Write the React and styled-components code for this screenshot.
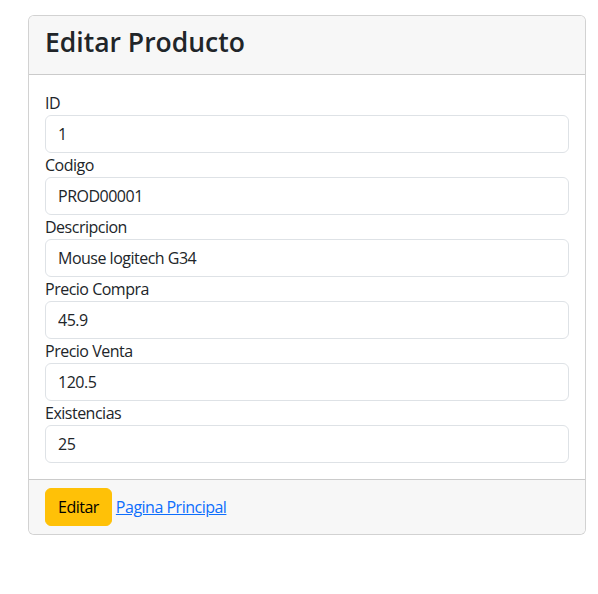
import React, { useState } from "react";
import styled, { createGlobalStyle } from "styled-components";

const GlobalStyle = createGlobalStyle`
    body {
        margin: 0;
        background: #fff;
        font-family: "Segoe UI", "Open Sans", "Noto Sans", sans-serif;
        font-size: 16px;
        letter-spacing: -0.5px;
        color: #212529;
    }
    * {
        box-sizing: border-box;
    }
`;

const Page = styled.div`
    padding: 15px 12px 0 28px;
`;

const Card = styled.div`
    width: 558px;
    border: 1px solid rgba(0, 0, 0, 0.175);
    border-radius: 6px;
    background: #fff;
    overflow: hidden;
`;

const CardHeader = styled.div`
    height: 59px;
    display: flex;
    align-items: center;
    padding: 0 16px 4px;
    background: #f7f7f7;
    border-bottom: 1px solid rgba(0, 0, 0, 0.175);
`;

const Title = styled.h2`
    margin: 0;
    font-size: 26.5px;
    font-weight: 600;
    letter-spacing: 0;
    line-height: 1.2;
`;

const CardBody = styled.div`
    padding: 16px;
`;

const Label = styled.label`
    display: block;
    line-height: 24px;
    font-size: 16px;
`;

const Input = styled.input`
    display: block;
    width: 100%;
    height: 38px;
    padding: 6px 12px;
    font: inherit;
    letter-spacing: inherit;
    color: #212529;
    border: 1px solid #dee2e6;
    border-radius: 6px;
    outline: none;
`;

const CardFooter = styled.div`
    display: flex;
    align-items: center;
    gap: 4px;
    padding: 8px 16px;
    background: #f7f7f7;
    border-top: 1px solid rgba(0, 0, 0, 0.175);
`;

const Button = styled.button`
    height: 38px;
    padding: 0 12px;
    font: inherit;
    letter-spacing: inherit;
    color: #000;
    background: #ffc107;
    border: 1px solid #ffc107;
    border-radius: 6px;
`;

const Link = styled.a`
    color: #0d6efd;
    text-decoration: underline;
`;

const campos = [
    { label: "ID", value: "1" },
    { label: "Codigo", value: "PROD00001" },
    { label: "Descripcion", value: "Mouse logitech G34" },
    { label: "Precio Compra", value: "45.9" },
    { label: "Precio Venta", value: "120.5" },
    { label: "Existencias", value: "25" },
];

export default function App() {
    const [values, setValues] = useState(campos.map((c) => c.value));

    return (
        <Page>
            <GlobalStyle />
            <Card>
                <CardHeader>
                    <Title>Editar Producto</Title>
                </CardHeader>
                <CardBody>
                    {campos.map((c, i) => (
                        <div key={c.label}>
                            <Label>{c.label}</Label>
                            <Input
                                value={values[i]}
                                onChange={(e) => {
                                    const next = [...values];
                                    next[i] = e.target.value;
                                    setValues(next);
                                }}
                            />
                        </div>
                    ))}
                </CardBody>
                <CardFooter>
                    <Button>Editar</Button>
                    <Link href="#">Pagina Principal</Link>
                </CardFooter>
            </Card>
        </Page>
    );
}
